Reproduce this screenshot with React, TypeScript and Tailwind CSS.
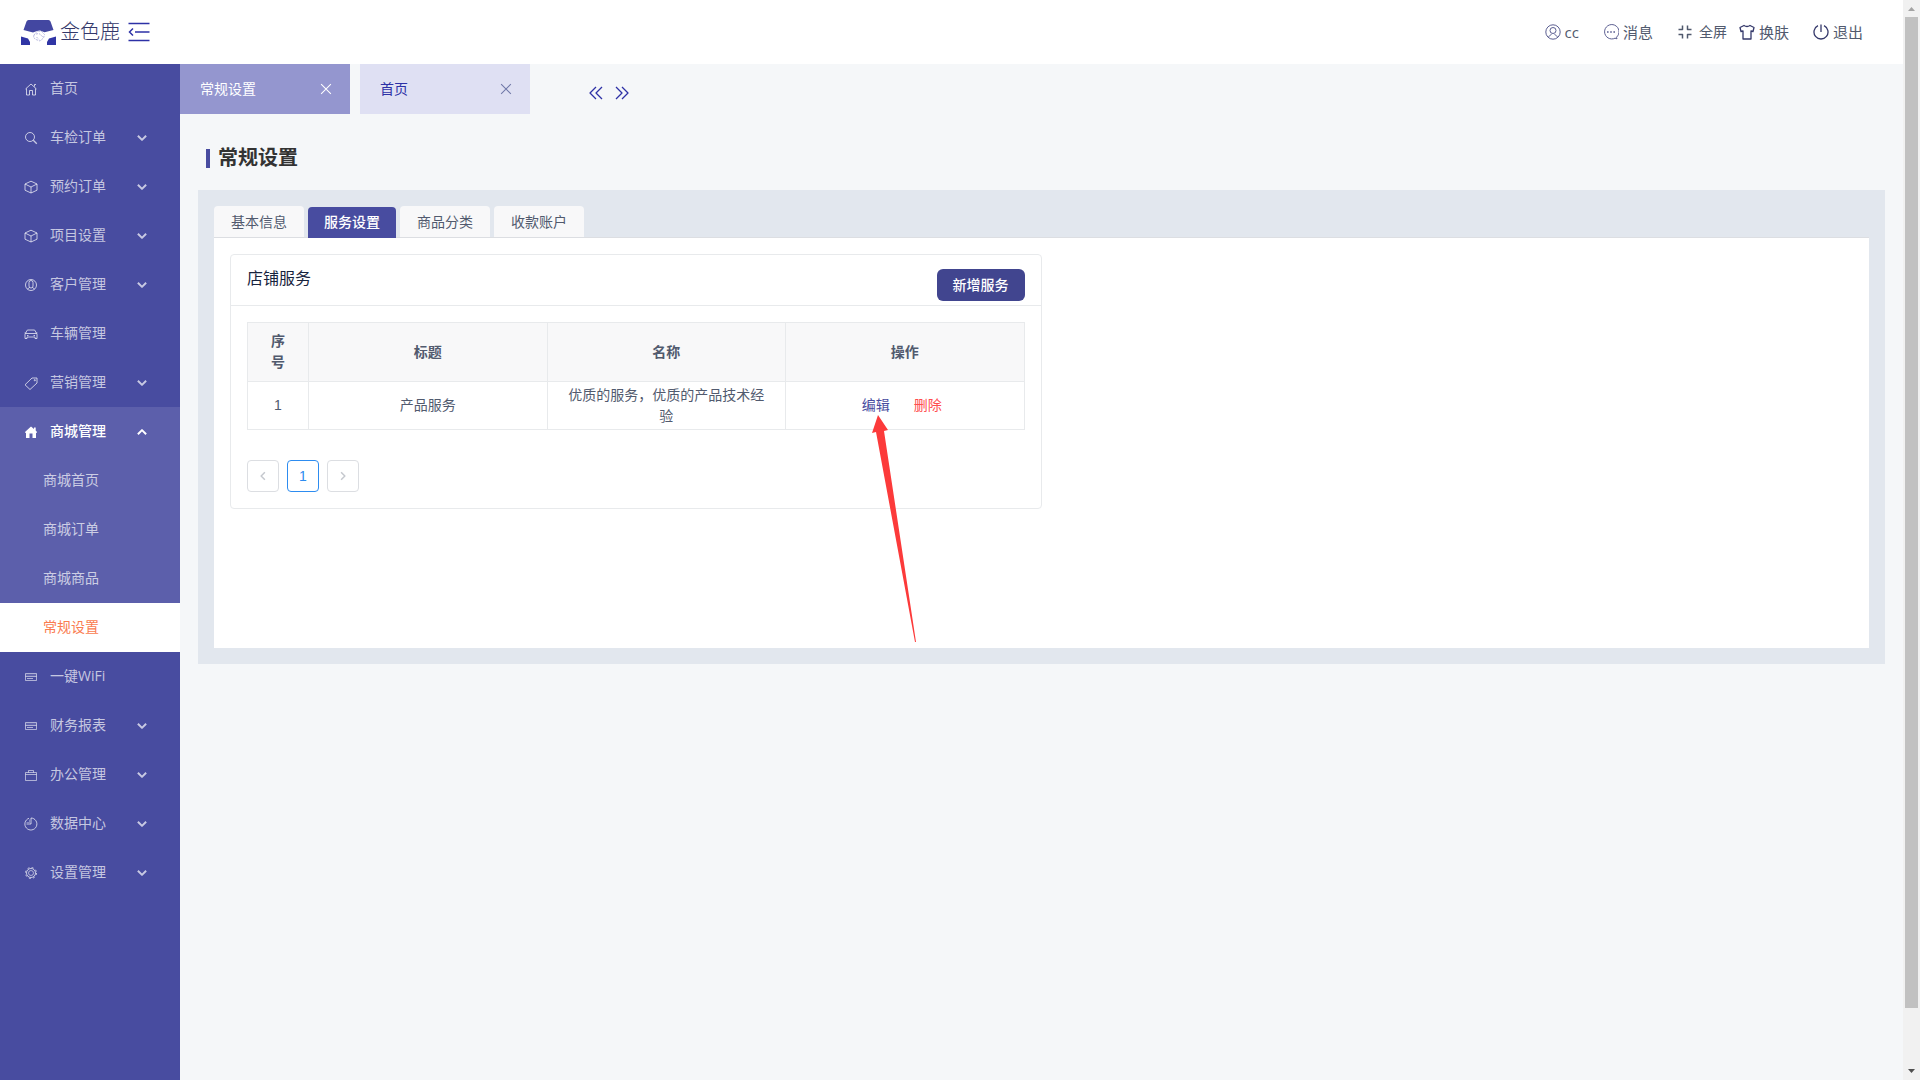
import { useState, type ReactNode } from "react";
import clsx from "clsx";

type IconProps = { children: ReactNode; className?: string };

const Icon = ({ children, className }: IconProps) => (
  <svg
    viewBox="0 0 16 16"
    fill="none"
    stroke="currentColor"
    strokeLinejoin="round"
    className={clsx("shrink-0", className ?? "size-4")}
    aria-hidden="true"
  >
    {children}
  </svg>
);

const HomeIcon = () => (
  <Icon>
    <path d="M2.5 8 8 3l5.500 5M3.500 7.500v6.500h3V9.500h3V14h3V7.500M11.500 5.500V3.500H13" />
  </Icon>
);

const SearchIcon = () => (
  <Icon>
    <circle cx="7" cy="7" r="4.500" />
    <path d="m10.300 10.300 3.500 3.500" strokeWidth="1.300" />
  </Icon>
);

const CubeIcon = () => (
  <Icon>
    <path d="M8 2.200 14 5v6.200L8 14 2 11.200V5zM2 5l6 3 6-3M8 8v6" />
  </Icon>
);

const ContactIcon = () => (
  <Icon>
    <circle cx="8" cy="8" r="5.500" />
    <path d="M6 9V5.500a2 2 0 0 1 4 0V9q0 2-2 2T6 9M4.500 12l2-1.500M11.500 12l-2-1.500" />
  </Icon>
);

const CarIcon = () => (
  <Icon>
    <path d="M2 12.500V8.500L3.800 4.800Q4 4 5 4h6q1 0 1.200.800L14 8.500v4h-2V11H4v1.500zM1.500 7h1.300M13.200 7h1.300M3 7.500h10M4 9.500h1.500M10.500 9.500H12" />
  </Icon>
);

const TagIcon = () => (
  <Icon>
    <path d="M9 3h5v5l-7 6.500L2 9.800z" />
    <circle cx="11.800" cy="5.200" r=".6" />
  </Icon>
);

const HomeSolidIcon = () => (
  <Icon>
    <path
      d="M8 2.500 11 5V3.500h1.700v3L14 8v.800h-1V14H9.500V9.500h-3V14H3V8.800H2V8z"
      fill="currentColor"
      stroke="none"
    />
  </Icon>
);

const CardIcon = () => (
  <Icon>
    <path d="M2.500 4.500h11v7h-11zM2.500 7.500h11M4 9.500h6" opacity=".8" />
    <path d="M2.500 6h11" opacity=".4" />
  </Icon>
);

const BriefcaseIcon = () => (
  <Icon>
    <path d="M2.500 5.500h11v8h-11zM5.500 5.500v-2h5v2M2.500 7.500h11" opacity=".8" />
  </Icon>
);

const PieIcon = () => (
  <Icon>
    <path d="M6 2.300A6 6 0 1 0 8 2v6H3.500" />
    <path d="M6.500 3.500v3H3.500" opacity=".5" />
  </Icon>
);

const CogIcon = () => (
  <Icon>
    <circle cx="8" cy="8" r="4.500" />
    <circle cx="8" cy="8" r="2.500" strokeWidth=".8" />
    <circle cx="8" cy="8" r="5.500" strokeDasharray="2 2.320" />
  </Icon>
);

const ChevronIcon = ({ up }: { up?: boolean }) => (
  <Icon className="ml-auto size-3">
    <path d={up ? "m2.500 11 5.500-5.500 5.500 5.500" : "m2.500 5 5.500 5.500L13.500 5"} strokeWidth="2.600" />
  </Icon>
);

const CloseIcon = () => (
  <Icon className="size-3">
    <path d="m1.500 1.500 13 13M14.500 1.500l-13 13" strokeWidth="1.400" />
  </Icon>
);

const Logo = () => (
  <svg viewBox="0 0 35 25" className="h-[25px] w-[35px] shrink-0" aria-hidden="true">
    <path d="M5.500 1.500Q6 0 7.500 0h20q1.500 0 2 1.500L32.500 10l-9 2.200-4.500-1.700-3 .5-4 1.500L2.500 10z" fill="#4347a1" />
    <path d="M0 16.500 7 18.500l2 3.500V25H0zM35 16.500 28 18.500l-2 3.500V25h9z" fill="#3035a5" />
    <path
      d="m13 15 3-3.500 4-.5 3.500 3.500-1 3.500-3.500 3-4-1.500-2.500-2zM15 14l3-.5 4 3.500M15.500 17l2.500 2.500"
      fill="none"
      stroke="#a3a5d6"
      strokeWidth=".8"
      strokeDasharray="2 1"
    />
  </svg>
);

type MenuItem = {
  label: string;
  icon: () => ReactNode;
  arrow?: boolean;
  children?: string[];
};

const menu: MenuItem[] = [
  { label: "首页", icon: HomeIcon },
  { label: "车检订单", icon: SearchIcon, arrow: true },
  { label: "预约订单", icon: CubeIcon, arrow: true },
  { label: "项目设置", icon: CubeIcon, arrow: true },
  { label: "客户管理", icon: ContactIcon, arrow: true },
  { label: "车辆管理", icon: CarIcon },
  { label: "营销管理", icon: TagIcon, arrow: true },
  {
    label: "商城管理",
    icon: HomeSolidIcon,
    arrow: true,
    children: ["商城首页", "商城订单", "商城商品", "常规设置"],
  },
  { label: "一键WiFi", icon: CardIcon },
  { label: "财务报表", icon: CardIcon, arrow: true },
  { label: "办公管理", icon: BriefcaseIcon, arrow: true },
  { label: "数据中心", icon: PieIcon, arrow: true },
  { label: "设置管理", icon: CogIcon, arrow: true },
];

const Header = () => (
  <header className="flex h-16 items-center justify-between bg-white pl-[21px] pr-10 text-[#515a6e]">
    <div className="flex items-center">
      <Logo />
      <span className="ml-1 text-xl font-light text-[#34386a]">金色鹿</span>
      <button type="button" aria-label="收起菜单" className="ml-2 text-[#2d31a6]">
        <svg viewBox="0 0 22 20" className="h-5 w-[22px]" fill="none" stroke="currentColor" strokeWidth="1.500">
          <path d="M.500 1.500h21M7 10h14.500M.500 18.500h21M5 6.500 1.500 10 5 13.500" />
        </svg>
      </button>
    </div>
    <nav className="flex items-center text-[15px]">
      <button type="button" className="mr-6 flex items-center gap-1">
        <Icon className="size-4 text-[#5c5f91]">
          <circle cx="8" cy="8" r="7.200" />
          <circle cx="8" cy="6.500" r="3" />
          <path d="M3.500 13.500c.5-2 2-2.500 3-3M12.500 13.500c-.5-2-2-2.500-3-3" />
        </Icon>
        cc
      </button>
      <button type="button" className="mr-6 flex items-center gap-1">
        <Icon className="size-4 text-[#5c5f91]">
          <path d="M13.500 13.200A7.200 7.200 0 1 0 12 14.200l2 .6z" />
          <path d="M4 8h1.600M7.200 8h1.600M10.400 8H12" strokeWidth="1.600" />
        </Icon>
        消息
      </button>
      <button type="button" className="mr-3 flex items-center gap-1.5 text-sm">
        <Icon className="size-4 text-[#515a6e]">
          <path d="M1.500 5.500h4v-4M10.500 1.500v4h4M1.500 10.500h4v4M14.500 10.500h-4v4" strokeWidth="1.500" />
        </Icon>
        全屏
      </button>
      <button type="button" className="mr-6 flex items-center gap-1">
        <Icon className="size-4 text-[#34386a]">
          <path d="M5 1.500q3 2 6 0l4 2-1 4-2-.5v8H4V7l-2 .5-1-4z" strokeWidth="1.300" />
        </Icon>
        换肤
      </button>
      <button type="button" className="flex items-center gap-1">
        <Icon className="size-4 text-[#34386a]">
          <path d="M5 1.700a7 7 0 1 0 6 0M8 .500v7.500" strokeWidth="1.300" />
        </Icon>
        退出
      </button>
    </nav>
  </header>
);

const Sidebar = () => (
  <aside className="w-[180px] shrink-0 bg-[#484ca0] text-sm text-white/70">
    <ul>
      {menu.map(({ label, icon: ItemIcon, arrow, children }) => (
        <li key={label} className={clsx(children && "bg-[#5c5fab]")}>
          <a
            href="#"
            className={clsx(
              "flex h-[49px] items-center pl-[23px] pr-8",
              children && "font-medium text-white"
            )}
          >
            <ItemIcon />
            <span className="ml-[11px] pb-0.5">{label}</span>
            {arrow && <ChevronIcon up={!!children} />}
          </a>
          {children && (
            <ul>
              {children.map((child) => (
                <li key={child}>
                  <a
                    href="#"
                    className={clsx(
                      "flex h-[49px] items-center pb-0.5 pl-[43px]",
                      child === "常规设置" && "bg-white text-[#fa7c50]"
                    )}
                  >
                    {child}
                  </a>
                </li>
              ))}
            </ul>
          )}
        </li>
      ))}
    </ul>
  </aside>
);

const PageTabs = () => (
  <div className="flex items-center gap-2.5 text-sm">
    <div className="flex h-[50px] w-[170px] items-center justify-between bg-[#9496cf] pl-5 pr-[18px] text-white">
      常规设置
      <button type="button" aria-label="关闭常规设置">
        <CloseIcon />
      </button>
    </div>
    <div className="flex h-[50px] w-[170px] items-center justify-between bg-[#dfe0f3] pl-5 pr-[18px] text-[#2d31a6]">
      首页
      <button type="button" aria-label="关闭首页" className="text-[#7078a8]">
        <CloseIcon />
      </button>
    </div>
    <div className="ml-12 mt-2 flex gap-2.5 text-[#2d31a6]">
      <button type="button" aria-label="向左">
        <Icon>
          <path d="M8 2 2 8l6 6M14 2 8 8l6 6" strokeWidth="1.300" />
        </Icon>
      </button>
      <button type="button" aria-label="向右">
        <Icon>
          <path d="m2 2 6 6-6 6M8 2l6 6-6 6" strokeWidth="1.300" />
        </Icon>
      </button>
    </div>
  </div>
);

const Pointer = () => (
  <svg
    viewBox="0 0 50 230"
    className="pointer-events-none absolute left-2 top-full h-[230px] w-[50px]"
    aria-hidden="true"
  >
    <path d="M8 0 18 15l-4 1 32 211h-1L6 17l-4 1z" fill="#fc3a3a" />
  </svg>
);

const ServiceTable = () => (
  <table className="w-full table-fixed border-collapse border border-[#dcdee2] text-center text-sm leading-[21px]">
    <thead>
      <tr className="bg-[#f8f8f9] font-bold">
        <th className="w-[61px] border border-[#e8eaec] px-[18px] pb-[9px] pt-[7px]">序号</th>
        <th className="border border-[#e8eaec] px-[18px] pb-0.5">标题</th>
        <th className="border border-[#e8eaec] px-[18px] pb-0.5">名称</th>
        <th className="border border-[#e8eaec] px-[18px] pb-0.5">操作</th>
      </tr>
    </thead>
    <tbody>
      <tr className="h-12">
        <td className="border border-[#e8eaec] font-['Liberation_Sans',sans-serif]">1</td>
        <td className="border border-[#e8eaec] px-[18px] pb-0.5">产品服务</td>
        <td className="border border-[#e8eaec] px-[18px] pb-0.5">优质的服务，优质的产品技术经验</td>
        <td className="border border-[#e8eaec] pb-0.5 pl-[18px] pr-6">
          <div className="flex justify-center gap-6">
            <span className="relative">
              <a href="#" className="text-[#484ca0]">编辑</a>
              <Pointer />
            </span>
            <a href="#" className="text-[#ff4d4f]">删除</a>
          </div>
        </td>
      </tr>
    </tbody>
  </table>
);

const Pagination = () => (
  <nav className="mt-[30px] flex gap-2 font-['Liberation_Sans',sans-serif] text-sm">
    <button type="button" aria-label="上一页" className="flex size-8 items-center justify-center rounded border border-[#dcdee2] text-[#c5c8ce]">
      <Icon className="size-3">
        <path d="M10.500 3 5.500 8l5 5" strokeWidth="2" />
      </Icon>
    </button>
    <button type="button" className="flex size-8 items-center justify-center rounded border border-[#2d8cf0] text-[#2d8cf0]">
      1
    </button>
    <button type="button" aria-label="下一页" className="flex size-8 items-center justify-center rounded border border-[#dcdee2] text-[#c5c8ce]">
      <Icon className="size-3">
        <path d="m5.500 3 5 5-5 5" strokeWidth="2" />
      </Icon>
    </button>
  </nav>
);

const settingTabs = ["基本信息", "服务设置", "商品分类", "收款账户"];

const SettingsPanel = () => {
  const [active, setActive] = useState("服务设置");

  return (
    <section className="mx-[18px] bg-[#e2e7ee] p-4">
      <div role="tablist" className="flex h-8 items-end gap-1 border-b border-[#dcdee2] text-sm">
        {settingTabs.map((tab) => (
          <button
            key={tab}
            type="button"
            role="tab"
            aria-selected={tab === active}
            onClick={() => setActive(tab)}
            className={clsx(
              "rounded-t",
              tab === active
                ? "-mb-px h-[31px] w-[88px] bg-[#484ca0] pb-0.5 font-medium text-white"
                : "h-[31px] w-[90px] bg-[#f8f8f9]"
            )}
          >
            {tab}
          </button>
        ))}
      </div>
      <div className="min-h-[410px] bg-white p-4">
        <div className="w-1/2 rounded border border-[#e8eaec]">
          <div className="flex h-[51px] items-start justify-between border-b border-[#e8eaec] px-4">
            <h2 className="mt-[11px] text-base text-[#17233d]">店铺服务</h2>
            <button type="button" className="mt-3.5 h-8 w-[88px] rounded-md bg-[#41458f] text-sm font-medium text-white">
              新增服务
            </button>
          </div>
          <div className="p-4">
            <ServiceTable />
            <Pagination />
          </div>
        </div>
      </div>
    </section>
  );
};

const Scrollbar = () => (
  <div className="flex w-[17px] shrink-0 flex-col items-center bg-[#f1f1f1]" aria-hidden="true">
    <svg viewBox="0 0 17 17" className="size-[17px]">
      <path d="M5 11h7L8.500 7z" fill="#a3a3a3" />
    </svg>
    <div className="mb-[55px] w-[13px] flex-1 bg-[#c1c1c1]" />
    <svg viewBox="0 0 17 17" className="size-[17px]">
      <path d="M5 6h7l-3.500 4z" fill="#505050" />
    </svg>
  </div>
);

export default function App() {
  return (
    <div className="flex min-h-screen font-['Open_Sans','Noto_Sans_CJK_SC',sans-serif] text-[#515a6e]">
      <div className="flex min-w-0 flex-1 flex-col">
        <Header />
        <div className="flex flex-1">
          <Sidebar />
          <main className="min-w-0 flex-1 bg-[#f5f7f9]">
            <PageTabs />
            <h1 className="mb-5 ml-[26px] mt-8 flex h-6 items-center gap-2 text-xl font-bold text-[#333]">
              <span className="h-[19px] w-1 bg-[#484ca0]" />
              常规设置
            </h1>
            <SettingsPanel />
          </main>
        </div>
      </div>
      <Scrollbar />
    </div>
  );
}
